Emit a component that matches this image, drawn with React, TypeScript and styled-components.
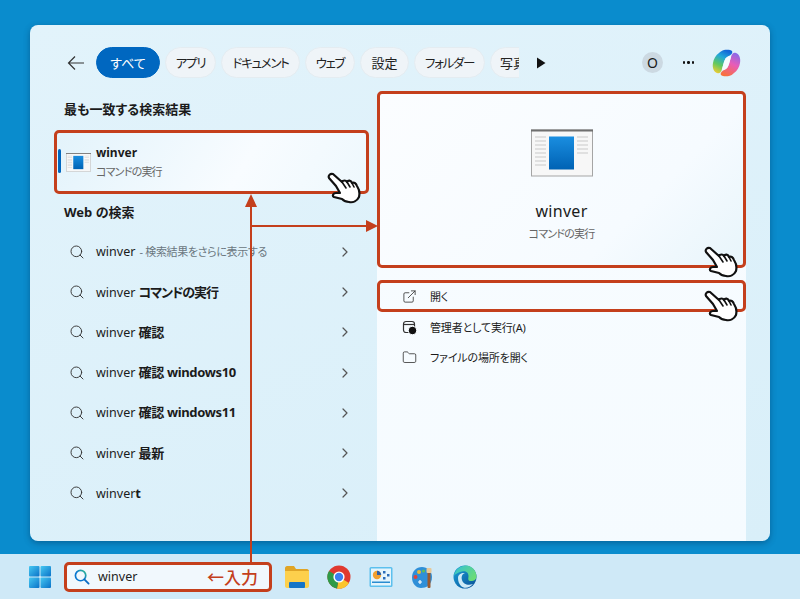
import React from "react";
import styled, { createGlobalStyle } from "styled-components";
import { Search, ChevronRight, ExternalLink, Folder } from "lucide-react";

const RED = "#c43f1c";

const GlobalStyle = createGlobalStyle`
  html, body { margin: 0; padding: 0; }
  body {
    font-family: "Noto Sans", "Noto Sans CJK JP", sans-serif;
    font-feature-settings: "palt";
    color: #1b1b1b;
  }
`;

const Desktop = styled.div`
  position: relative;
  width: 800px;
  height: 599px;
  overflow: hidden;
  background: #0a8ccd;
  padding-top: 25px;
  box-sizing: border-box;
`;

const Panel = styled.div`
  width: 740px;
  height: 516px;
  margin: 0 30px 13px;
  border-radius: 8px;
  background: linear-gradient(160deg, #e2f3fb 0%, #d9eff9 100%);
  box-shadow: 0 2px 6px rgba(0, 50, 90, 0.45);
  display: flex;
  flex-direction: column;
`;

const Header = styled.div`
  display: flex;
  align-items: center;
  height: 31px;
  padding: 22px 29px 0 37px;
  margin-bottom: 13px;
`;

const BackIcon = styled.svg`
  width: 18px;
  height: 16px;
  margin-right: 11px;
  flex-shrink: 0;
`;

const ChipRow = styled.div`
  width: 423px;
  display: flex;
  gap: 5px;
  overflow: hidden;
  flex-shrink: 0;
`;

const Chip = styled.div<{ $active?: boolean; $w: number; $clipped?: boolean; $tight?: boolean }>`
  width: ${(p) => p.$w}px;
  height: 31px;
  flex-shrink: 0;
  box-sizing: border-box;
  border-radius: 16px;
  display: flex;
  align-items: center;
  justify-content: ${(p) => (p.$clipped ? "flex-start" : "center")};
  padding-left: ${(p) => (p.$clipped ? 9 : 0)}px;
  font-size: ${(p) => (p.$tight ? 12.5 : 13)}px;
  letter-spacing: ${(p) => (p.$tight ? -1.3 : 0)}px;
  white-space: nowrap;
  color: ${(p) => (p.$active ? "#fff" : "#222")};
  background: ${(p) => (p.$active ? "#0067c0" : "#eff4f8")};
  border: 1px solid ${(p) => (p.$active ? "#0067c0" : "#e4ecf1")};
`;

const PlayIcon = styled.svg`
  width: 10px;
  height: 12px;
  margin-left: 17px;
`;

const Avatar = styled.div`
  width: 21px;
  height: 21px;
  margin-left: auto;
  border-radius: 50%;
  background: #ccd9e2;
  display: flex;
  align-items: center;
  justify-content: center;
  font-size: 14px;
`;

const Dots = styled.div`
  width: 11px;
  margin-left: 20px;
  margin-right: 1px;
  display: flex;
  justify-content: space-between;
`;

const Dot = styled.span`
  width: 2.4px;
  height: 2.4px;
  border-radius: 50%;
  background: #111;
`;

const CopilotIcon = styled.svg`
  width: 29px;
  height: 28px;
  margin-left: 17px;
  flex-shrink: 0;
`;

const Body = styled.div`
  flex: 1;
  display: flex;
  gap: 8px;
  padding: 0 24px;
  min-height: 0;
`;

const LeftColumn = styled.div`
  width: 315px;
  flex-shrink: 0;
`;

const SectionTitle = styled.div<{ $h: number }>`
  height: ${(p) => p.$h}px;
  line-height: ${(p) => p.$h - 2}px;
  padding-left: 10px;
  font-size: 13px;
  font-weight: 700;
  color: #1b1b1b;
`;

const ResultCard = styled.div`
  position: relative;
  height: 64px;
  box-sizing: border-box;
  border: 3px solid ${RED};
  border-radius: 5px;
  background: linear-gradient(120deg, #e3f3fb 0%, #f8fcff 60%, #eef8fd 100%);
  display: flex;
  align-items: center;
  padding-left: 9px;
`;

const AccentBar = styled.span`
  position: absolute;
  left: 1px;
  top: 16px;
  width: 3px;
  height: 24px;
  background: #0067c0;
  border-radius: 2px;
`;

const SmallAppIcon = styled.svg`
  width: 25px;
  height: 19px;
  flex-shrink: 0;
`;

const ResultText = styled.div`
  margin-left: 5px;
  display: flex;
  flex-direction: column;
  gap: 1px;
`;

const ResultName = styled.div`
  font-size: 12px;
  font-weight: 700;
  line-height: 18px;
  color: #1b1b1b;
`;

const Sub = styled.div`
  font-size: 11px;
  line-height: 18px;
  letter-spacing: -0.8px;
  color: #666;
`;

const WebRow = styled.div`
  height: 40.2px;
  display: flex;
  align-items: center;
  padding: 0 16px 0 15px;
  font-size: 12.5px;
  white-space: nowrap;
  color: #1b1b1b;
`;

const RowLabel = styled.span`
  margin-left: 11px;
  flex: 1;
  line-height: 16px;
`;

const Strong = styled.b<{ $kana?: boolean }>`
  font-size: 13px;
  letter-spacing: ${(p) => (p.$kana ? -1.1 : -0.35)}px;
  font-weight: 700;
`;

const Hint = styled.span`
  margin-left: 1px;
  font-size: 11px;
  letter-spacing: -0.35px;
  color: #6b7780;
`;

const RightColumn = styled.div`
  width: 369px;
  flex-shrink: 0;
  border-radius: 6px 6px 0 0;
  background: linear-gradient(170deg, #f8fcff 0%, #f5fbff 100%);
`;

const Preview = styled.div`
  height: 177px;
  box-sizing: border-box;
  border: 3px solid ${RED};
  border-radius: 5px;
  background: linear-gradient(135deg, #fbfdff 0%, #f6fbff 70%, #e8f5fb 100%);
  margin-bottom: 12px;
  display: flex;
  flex-direction: column;
  align-items: center;
  padding-top: 35px;
`;

const BigAppIcon = styled.svg`
  width: 62px;
  height: 48px;
`;

const PreviewName = styled.div`
  margin-top: 23px;
  font-size: 16px;
  line-height: 22px;
  letter-spacing: 0.3px;
  color: #1b1b1b;
`;

const PreviewSub = styled(Sub)`
  margin-top: 4px;
  line-height: 16px;
`;

const ActionRow = styled.div<{ $boxed?: boolean }>`
  height: ${(p) => (p.$boxed ? 32 : 30)}px;
  box-sizing: border-box;
  border: ${(p) => (p.$boxed ? `3px solid ${RED}` : "none")};
  border-radius: 5px;
  display: flex;
  align-items: center;
  gap: 13px;
  padding-left: ${(p) => (p.$boxed ? 22 : 25)}px;
  font-size: 11px;
  letter-spacing: -0.15px;
  color: #1b1b1b;
`;

const AdminIcon = styled.svg`
  width: 15px;
  height: 15px;
  flex-shrink: 0;
`;

const Taskbar = styled.div`
  height: 45px;
  background: #cfe9f7;
  display: flex;
  align-items: center;
  padding-left: 28px;
`;

const StartIcon = styled.svg`
  width: 24px;
  height: 24px;
  flex-shrink: 0;
`;

const SearchBox = styled.div`
  width: 208px;
  height: 30px;
  margin-left: 12px;
  box-sizing: border-box;
  border: 3px solid ${RED};
  border-radius: 5px;
  background: #f1f8fd;
  display: flex;
  align-items: center;
  padding-left: 7px;
  font-size: 12.5px;
  color: #222;
`;

const SearchGlyph = styled.svg`
  width: 16px;
  height: 16px;
  flex-shrink: 0;
  margin-right: 8px;
`;

const InputNote = styled.span`
  margin-left: auto;
  margin-right: 11px;
  font-size: 17px;
  font-weight: 500;
  font-feature-settings: "palt" 0;
  color: ${RED};
`;

const TrayIcons = styled.div`
  display: flex;
  gap: 18px;
  margin-left: 13px;
`;

const TrayIcon = styled.svg`
  width: 24px;
  height: 24px;
`;

const ArrowLayer = styled.svg`
  position: absolute;
  left: 0;
  top: 0;
  width: 800px;
  height: 599px;
  pointer-events: none;
`;

const HandSvg = styled.svg<{ $x: number; $y: number }>`
  position: absolute;
  left: ${(p) => p.$x}px;
  top: ${(p) => p.$y}px;
  width: 34px;
  height: 32px;
  pointer-events: none;
`;

function Hand({ x, y }: { x: number; y: number }) {
  return (
    <HandSvg $x={x} $y={y} viewBox="0 0 34 32">
      <path
        d="M2 6 C1 4 3 1 6 2 L15 10 C16 8 19 8 20 10 C21 8 24 8 25 11 C27 10 29 11 30 14 C32 17 33 21 32 25 C30 29 26 31 22 30 C19 30 17 29 15 27 L7 25 C5 24 6 21 9 21 L13 21 L9 14 Z"
        fill="#fff"
        stroke="#111"
        strokeWidth="2.2"
        strokeLinejoin="round"
      />
      <path d="M15 10 L19 16 M20 10 L23 15 M25 11 L27 15" stroke="#111" strokeWidth="1.6" fill="none" strokeLinecap="round" />
    </HandSvg>
  );
}

function AppGlyph() {
  return (
    <>
      <rect x="0.5" y="0.5" width="61" height="46" fill="#f7f7f7" stroke="#a5a5a5" />
      <rect x="0" y="0" width="62" height="2" fill="#6f6f6f" />
      <rect x="18" y="7" width="25" height="33" fill="url(#appBlue)" />
      {[7, 11, 15, 19, 23, 27, 31, 35].map((y) => (
        <rect key={y} x="4" y={y} width="11" height="1" fill="#c9c9c9" />
      ))}
      {[7, 11, 15, 19, 23].map((y) => (
        <rect key={y} x="46" y={y} width="11" height="1" fill="#c9c9c9" />
      ))}
    </>
  );
}

const webRows: React.ReactNode[] = [
  <>winver <Hint>- 検索結果をさらに表示する</Hint></>,
  <>winver <Strong $kana>コマンドの実行</Strong></>,
  <>winver <Strong>確認</Strong></>,
  <>winver <Strong>確認 windows10</Strong></>,
  <>winver <Strong>確認 windows11</Strong></>,
  <>winver <Strong>最新</Strong></>,
  <>winver<Strong>t</Strong></>,
];

const chips = [
  { label: "すべて", w: 64, active: true },
  { label: "アプリ", w: 51, tight: true },
  { label: "ドキュメント", w: 79, tight: true },
  { label: "ウェブ", w: 50, tight: true },
  { label: "設定", w: 49 },
  { label: "フォルダー", w: 71, tight: true },
  { label: "写真", w: 60, clipped: true },
];

export default function App() {
  return (
    <>
      <GlobalStyle />
      <Desktop>
        <svg width="0" height="0" style={{ position: "absolute" }}>
          <defs>
            <linearGradient id="appBlue" x1="0" y1="0" x2="0" y2="1">
              <stop offset="0" stopColor="#1a8ee0" />
              <stop offset="1" stopColor="#0062b4" />
            </linearGradient>
            <linearGradient id="winBlue" x1="0" y1="0" x2="1" y2="1">
              <stop offset="0" stopColor="#45c8f2" />
              <stop offset="1" stopColor="#0a72c8" />
            </linearGradient>
            <linearGradient id="searchRing" x1="0" y1="1" x2="1" y2="0">
              <stop offset="0.5" stopColor="#0a78d0" />
              <stop offset="1" stopColor="#35c08a" />
            </linearGradient>
            <linearGradient id="edgeBlue" x1="0" y1="0" x2="1" y2="1">
              <stop offset="0" stopColor="#1aa0d8" />
              <stop offset="1" stopColor="#0a4e96" />
            </linearGradient>
            <linearGradient id="edgeGreen" x1="0" y1="0" x2="1" y2="0.6">
              <stop offset="0" stopColor="#30c0d8" />
              <stop offset="1" stopColor="#6adc78" />
            </linearGradient>
            <linearGradient id="copA" x1="0.6" y1="0" x2="0.2" y2="1">
              <stop offset="0" stopColor="#1468d8" />
              <stop offset="0.3" stopColor="#22a8d8" />
              <stop offset="0.65" stopColor="#62c860" />
              <stop offset="1" stopColor="#f4cc30" />
            </linearGradient>
            <linearGradient id="copB" x1="0.7" y1="0" x2="0.3" y2="1">
              <stop offset="0" stopColor="#8a6ae8" />
              <stop offset="0.45" stopColor="#e85cb8" />
              <stop offset="1" stopColor="#f8703c" />
            </linearGradient>
          </defs>
        </svg>

        <Panel>
          <Header>
            <BackIcon viewBox="0 0 18 16">
              <path d="M17 8 H1.5 M8 1.5 L1.5 8 L8 14.5" fill="none" stroke="#333" strokeWidth="1.2" />
            </BackIcon>
            <ChipRow>
              {chips.map((c) => (
                <Chip key={c.label} $w={c.w} $active={c.active} $clipped={c.clipped} $tight={c.tight}>
                  {c.label}
                </Chip>
              ))}
            </ChipRow>
            <PlayIcon viewBox="0 0 10 12">
              <path d="M1 0.5 L9.5 6 L1 11.5 Z" fill="#111" />
            </PlayIcon>
            <Avatar>O</Avatar>
            <Dots>
              <Dot />
              <Dot />
              <Dot />
            </Dots>
            <CopilotIcon viewBox="0 0 29 28">
              <path d="M12 1 C14 0.5 19 0.5 20 2 C21 4 19 6 17 7 C14 8 13 10 12 13 L10 20 C9 24 7 25 5 24 C2 23 0 19 1 14 C1.5 10 4 6 7 4 C8.5 2.5 10 1.5 12 1 Z" fill="url(#copA)" />
              <path d="M17 27 C15 27.5 10 27.5 9 26 C8 24 10 22 12 21 C15 20 16 18 17 15 L19 8 C20 4 22 3 24 4 C27 5 29 9 28 14 C27.5 18 25 22 22 24 C20.5 25.5 19 26.5 17 27 Z" fill="url(#copB)" />
              <path d="M17 7 C14 8 13 10 12 13 L10 20 C10 21 10.5 21 12 21 C15 20 16 18 17 15 L19 8 C19 7 18 6.8 17 7 Z" fill="#f6fbfe" />
            </CopilotIcon>
          </Header>

          <Body>
            <LeftColumn>
              <SectionTitle $h={39}>最も一致する検索結果</SectionTitle>
              <ResultCard>
                <AccentBar />
                <SmallAppIcon viewBox="0 0 62 47">
                  <AppGlyph />
                </SmallAppIcon>
                <ResultText>
                  <ResultName>winver</ResultName>
                  <Sub>コマンドの実行</Sub>
                </ResultText>
              </ResultCard>
              <SectionTitle $h={38}>Web の検索</SectionTitle>
              {webRows.map((label, i) => (
                <WebRow key={i}>
                  <Search size={16} strokeWidth={1.4} color="#333" />
                  <RowLabel>{label}</RowLabel>
                  <ChevronRight size={16} strokeWidth={1.8} color="#555" />
                </WebRow>
              ))}
            </LeftColumn>

            <RightColumn>
              <Preview>
                <BigAppIcon viewBox="0 0 62 47">
                  <AppGlyph />
                </BigAppIcon>
                <PreviewName>winver</PreviewName>
                <PreviewSub>コマンドの実行</PreviewSub>
              </Preview>
              <ActionRow $boxed>
                <ExternalLink size={15} strokeWidth={1.3} color="#333" />
                開く
              </ActionRow>
              <ActionRow>
                <AdminIcon viewBox="0 0 15 15">
                  <rect x="1.5" y="1.5" width="11" height="11" rx="2.5" fill="none" stroke="#333" strokeWidth="1.2" />
                  <path d="M1.5 4.5 H12.5" stroke="#333" strokeWidth="1.2" />
                  <circle cx="10.5" cy="10.5" r="4.2" fill="#111" stroke="#f7fcff" />
                </AdminIcon>
                管理者として実行(A)
              </ActionRow>
              <ActionRow>
                <Folder size={15} strokeWidth={1.3} color="#333" />
                ファイルの場所を開く
              </ActionRow>
            </RightColumn>
          </Body>
        </Panel>

        <Taskbar>
          <StartIcon viewBox="0 0 24 24">
            <rect x="1" y="1" width="10.5" height="10.5" rx="1" fill="url(#winBlue)" />
            <rect x="12.5" y="1" width="10.5" height="10.5" rx="1" fill="url(#winBlue)" />
            <rect x="1" y="12.5" width="10.5" height="10.5" rx="1" fill="url(#winBlue)" />
            <rect x="12.5" y="12.5" width="10.5" height="10.5" rx="1" fill="url(#winBlue)" />
          </StartIcon>
          <SearchBox>
            <SearchGlyph viewBox="0 0 17 17">
              <circle cx="7" cy="7" r="5.5" fill="none" stroke="url(#searchRing)" strokeWidth="1.8" />
              <path d="M11 11 L15.5 15.5" stroke="#0a6cc4" strokeWidth="2" strokeLinecap="round" />
            </SearchGlyph>
            winver
            <InputNote>←入力</InputNote>
          </SearchBox>
          <TrayIcons>
            <TrayIcon viewBox="0 0 24 24">
              <path d="M0 3 C0 2 1 1 2 1 H9 L11 4 H22 C23 4 24 5 24 6 V8 H0 Z" fill="#e0a526" />
              <path d="M0 6 H24 V21 C24 22 23 23 22 23 H2 C1 23 0 22 0 21 Z" fill="#fdd04c" />
              <rect x="4" y="17" width="16" height="6" rx="1" fill="#1575c8" />
            </TrayIcon>
            <TrayIcon viewBox="0 0 24 24">
              <circle cx="12" cy="12" r="11.5" fill="#e0392f" />
              <path d="M12 12 L22 18 A11.5 11.5 0 0 1 10 23.4 Z" fill="#fbc52d" />
              <path d="M12 12 L10 23.4 A11.5 11.5 0 0 1 2 6 Z" fill="#2f9a47" />
              <circle cx="12" cy="12" r="5.6" fill="#fff" />
              <circle cx="12" cy="12" r="4.2" fill="#3c7ff0" />
            </TrayIcon>
            <TrayIcon viewBox="0 0 24 24">
              <rect x="0.5" y="2" width="23" height="20" rx="1.5" fill="#5cc0ee" />
              <rect x="2" y="3.5" width="20" height="17" fill="#e4f4fc" />
              <circle cx="8" cy="10" r="4.2" fill="#f0a030" />
              <path d="M8 10 V5.8 A4.2 4.2 0 0 1 12.2 10 Z" fill="#2a5fa8" />
              <rect x="14" y="6" width="2.5" height="2.5" fill="#2a6cb8" />
              <rect x="18" y="9" width="2.5" height="2.5" fill="#2a6cb8" />
              <rect x="14" y="12" width="2.5" height="2.5" fill="#2a6cb8" />
              <rect x="3" y="16.5" width="18" height="1.5" fill="#2a8cd0" />
            </TrayIcon>
            <TrayIcon viewBox="0 0 24 24">
              <path d="M11 2 C5 2 1 6.5 1 12.5 C1 18.5 5 23 10 23 C15 23 21 20 21 12 C21 6 16 2 11 2 Z" fill="#2f8fd8" />
              <circle cx="8" cy="7" r="2" fill="#e8b838" />
              <circle cx="4.5" cy="12" r="2" fill="#e0453a" />
              <circle cx="12.5" cy="6" r="1.6" fill="#5bbd5a" />
              <path d="M7 17 H11 M9 15 V19" stroke="#fff" strokeWidth="1.2" />
              <rect x="16.5" y="7" width="3" height="16" rx="1" fill="#9a5a30" />
              <rect x="15.5" y="3" width="5" height="5" rx="1" fill="#e8c898" />
            </TrayIcon>
            <TrayIcon viewBox="0 0 24 24">
              <circle cx="12" cy="12" r="11.5" fill="url(#edgeBlue)" />
              <path d="M1 11 C2 4 8 0.5 13 0.5 C19 0.5 23.5 6 23.5 11.5 C23.5 15 20 16.5 17 16 C14.5 15.5 15.5 13 15.5 11 C15.5 7 12 5.5 9 6.5 C5 7.5 2 9 1 11 Z" fill="url(#edgeGreen)" />
              <path d="M5 13 C5 9 9 7.5 12 8 C9 9 8 12 9 15 C10 19 15 21 20 19 C17 23 11 24 8 21 C6 19 5 16 5 13 Z" fill="#d8f0fa" opacity="0.95" />
            </TrayIcon>
          </TrayIcons>
        </Taskbar>

        <ArrowLayer viewBox="0 0 800 599">
          <path d="M251 562 V205 M251 226 H368" stroke={RED} strokeWidth="2" fill="none" />
          <path d="M251 194 L245 207 H257 Z" fill={RED} />
          <path d="M378 226 L366 220 V232 Z" fill={RED} />
        </ArrowLayer>
        <Hand x={327} y={172} />
        <Hand x={704} y={246} />
        <Hand x={704} y={290} />
      </Desktop>
    </>
  );
}
